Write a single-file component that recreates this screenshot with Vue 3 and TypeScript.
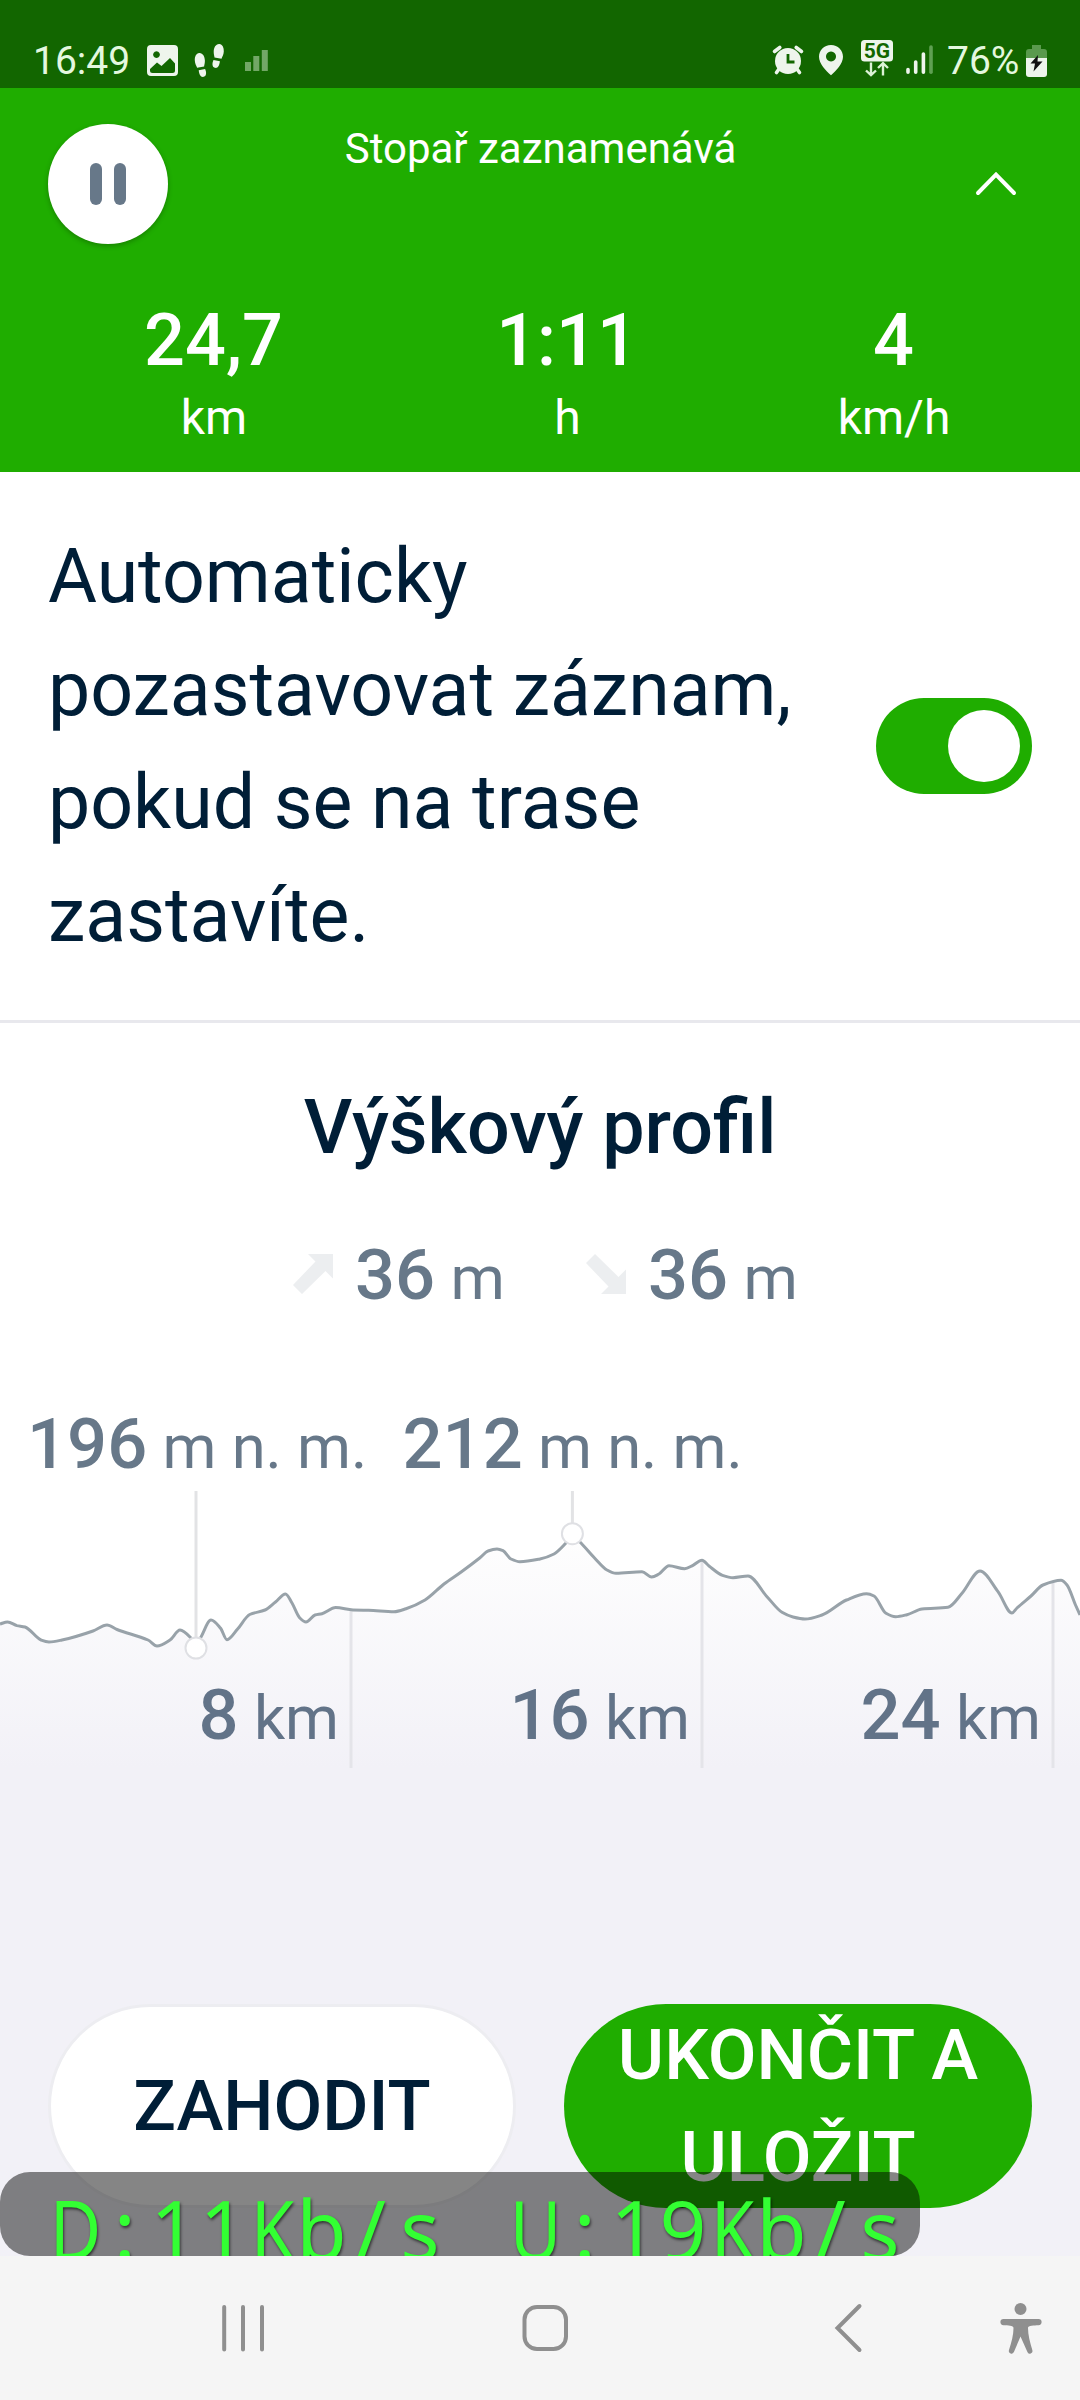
<script setup lang="ts">
type Point = [number, number]

const stats = [
  { value: '24,7', unit: 'km' },
  { value: '1:11', unit: 'h' },
  { value: '4', unit: 'km/h' },
]

const download = 'D:11Kb/s'.split('')
const upload = 'U:19Kb/s'.split('')

const profile: Point[] = [
  [0, 1624], [7.6, 1622], [17, 1625.6], [25, 1627], [41, 1640], [49, 1642], [62, 1640], [93, 1631],
  [107, 1625], [117, 1629.5], [148, 1640], [157, 1646], [170, 1640], [180, 1630], [191.5, 1638.7],
  [196, 1646], [201, 1637], [211, 1620], [220.4, 1628], [227, 1639.7], [237.6, 1629], [249.7, 1614.5],
  [265, 1610], [275.5, 1602], [285.5, 1594], [292, 1603], [299.6, 1617.7], [306, 1622], [315, 1615],
  [322, 1613.7], [335.7, 1607.6], [353, 1610], [368.5, 1610.3], [394, 1611.7], [406, 1608.7],
  [425, 1600], [444, 1584], [461.5, 1571.7], [480, 1557.7], [488, 1551], [497, 1549], [503, 1550.7],
  [511, 1559], [520, 1561.7], [540, 1559], [554, 1554], [566, 1543], [572.4, 1535], [580, 1542],
  [595, 1558.5], [607, 1570], [616, 1573.3], [642, 1571.7], [651.6, 1577], [659, 1574], [669, 1565.7],
  [684.6, 1568.7], [693, 1565.3], [702, 1560.3], [709, 1566], [722.5, 1575.3], [733, 1577.7],
  [748, 1576], [767, 1596.7], [782, 1612.3], [793, 1617], [805, 1619], [822, 1615], [846.5, 1600],
  [866.5, 1593.7], [874, 1596], [886, 1613.3], [895.7, 1616.7], [907, 1614.7], [922, 1609],
  [948, 1607.3], [962, 1593.3], [980, 1571], [998, 1591.7], [1012, 1613], [1017, 1608], [1031, 1596],
  [1043, 1585], [1061, 1580.3], [1067, 1585], [1075.5, 1605], [1080, 1615],
]

// Monotone cubic interpolation, so peaks never overshoot the samples.
function smooth(points: Point[]): string {
  const last = points.length - 1
  const slopes = points.slice(1).map((p, i) => (p[1] - points[i][1]) / (p[0] - points[i][0]))
  const tangents = points.map((_, i) => {
    if (i === 0) return slopes[0]
    if (i === last) return slopes[last - 1]
    const a = slopes[i - 1]
    const b = slopes[i]
    return a * b <= 0 ? 0 : (2 * a * b) / (a + b)
  })
  let d = `M${points[0][0]} ${points[0][1]}`
  for (let i = 0; i < last; i++) {
    const [x0, y0] = points[i]
    const [x1, y1] = points[i + 1]
    const h = (x1 - x0) / 3
    d += `C${(x0 + h).toFixed(1)} ${(y0 + tangents[i] * h).toFixed(1)} ${(x1 - h).toFixed(1)} ${(y1 - tangents[i + 1] * h).toFixed(1)} ${x1} ${y1}`
  }
  return d
}

const line = smooth(profile)
const area = `${line}V1768H0Z`

const distances = [
  { x: 351, y: 1611, km: '8' },
  { x: 702, y: 1562, km: '16' },
  { x: 1053, y: 1583, km: '24' },
]

const extremes = [
  { x: 196, y: 1648, label: '196', labelX: 27 },
  { x: 572.4, y: 1533.7, label: '212', labelX: 402.5 },
]
</script>

<template>
  <div class="screen">
    <div class="status">
      <div class="side">
        <span class="clock">16:49</span>
        <svg class="left-icons" width="124" height="40" viewBox="146 41 124 40">
          <path
            fill="#eef5ec" fill-rule="evenodd"
            d="M151 45H174a4 4 0 0 1 4 4V72a4 4 0 0 1-4 4H151a4 4 0 0 1-4-4V49a4 4 0 0 1 4-4ZM156.500 51.200a3.400 3.400 0 1 0 .01 0ZM150 69L157 62.500L161.500 66L170 58L175 63.500V70.500a2.500 2.500 0 0 1-2.500 2.500H152.500a2.500 2.500 0 0 1-2.500-2.500Z"
          />
          <g fill="#eef5ec">
            <path d="M199.200 53c3.500-.3 5.600 3.500 5.700 7.700 0 2.400-.6 4.200-.8 5.700l-7 1.300c-.6-2-2.200-4-2.300-7.300-.1-4 1.400-7.100 4.400-7.400ZM198.700 70.200l6.400-1.200c1.400 3 1.600 7-1.300 7.800-3.200.8-4.700-2.700-5.100-6.600Z" />
            <path d="M219.400 44c-3.500-.3-5.600 3.500-5.700 7.700 0 2.400.6 4.200.8 5.700l7 1.300c.6-2 2.200-4 2.300-7.300.1-4-1.400-7.100-4.400-7.400ZM219.900 61.200l-6.400-1.200c-1.400 3-1.600 7 1.300 7.800 3.200.8 4.700-2.700 5.100-6.600Z" />
          </g>
          <path fill="#72a766" d="M245 62h6v9h-6ZM253.300 56h6v15h-6ZM261.800 50h6v21h-6Z" />
        </svg>
      </div>
      <div class="side">
        <svg width="164" height="40" viewBox="771 41 164 40" class="right-icons">
          <g stroke="#eef5ec" stroke-linecap="round" fill="none">
            <path d="M774.500 51.500L779.800 47.500M801.500 51.500L796.200 47.500" stroke-width="3.600" />
            <path d="M779 69L776.500 72.500M797 69L799.500 72.500" stroke-width="3.600" />
          </g>
          <circle cx="788" cy="61" r="13" fill="#eef5ec" />
          <path d="M788 54V62H794.500" stroke="#126600" stroke-width="2.800" fill="none" />
          <path fill="#eef5ec" fill-rule="evenodd" d="M831 45c7 0 12 5.200 12 11.800 0 7-7 14-12 18.500-5-4.500-12-11.500-12-18.500C819 50.200 824 45 831 45ZM831 51.500a5 5 0 1 0 .01 0Z" />
          <rect x="861" y="40" width="32" height="21.500" rx="3.500" fill="#eef5ec" />
          <text x="877" y="58.200" class="net" text-anchor="middle">5G</text>
          <path d="M871 62.500V75M866 70.500L871 75.200L876 70.500M883 75.500V63.500M878 68L883 63.200L888 68" stroke="#dcf2d6" stroke-width="2.400" fill="none" />
          <g stroke-width="3.600" stroke-linecap="round" stroke="#eef5ec">
            <path d="M908 69.500V72.300M915.700 62V72.300M923.400 54V72.300" />
            <path d="M931 47V72.300" stroke="#5fa052" />
          </g>
        </svg>
        <span class="percent">76%</span>
        <svg width="22" height="34" viewBox="1026 43 22 34" class="battery">
          <path fill="#5a9a4d" d="M1032 44H1041V48H1044a3 3 0 0 1 3 3V57H1026V51a3 3 0 0 1 3-3H1032Z" />
          <path fill="#eef5ec" d="M1026 57H1047V73a3 3 0 0 1-3 3H1029a3 3 0 0 1-3-3Z" />
          <path fill="#111" d="M1038 54L1030.500 62.500H1035L1033.500 70.500L1042.500 60.500H1037.500Z" />
        </svg>
      </div>
    </div>

    <header class="header">
      <div class="bar">
        <button class="pause" type="button" aria-label="Pozastavit"><i /><i /></button>
        <div class="title">Stopař zaznamenává</div>
        <svg width="120" height="120" viewBox="0 0 120 120">
          <path d="M66 69L84 50.500L102 69" fill="none" stroke="#fff" stroke-width="4" stroke-linecap="round" />
        </svg>
      </div>
      <div class="stats">
        <div v-for="s in stats" :key="s.unit" class="stat">
          <div class="value">{{ s.value }}</div>
          <div class="unit">{{ s.unit }}</div>
        </div>
      </div>
    </header>

    <section class="auto">
      <p>Automaticky pozastavovat záznam, pokud se na trase zastavíte.</p>
      <div class="toggle"><span /></div>
    </section>

    <section class="elevation">
      <h2>Výškový profil</h2>
      <div class="climb">
        <div class="delta">
          <svg width="40" height="40" viewBox="0 0 40 40"><path fill="#eceef0" d="M15 0H40V24.500L32.500 17L9 40L0 31L22.500 7.500Z" /></svg>
          <span><b>36</b> m</span>
        </div>
        <div class="delta">
          <svg width="40" height="40" viewBox="0 0 40 40"><path fill="#eceef0" d="M15 40H40V15.500L32.500 23L9 0L0 9L22.500 32.500Z" /></svg>
          <span><b>36</b> m</span>
        </div>
      </div>
      <svg class="chart" width="1080" height="441" viewBox="0 1327 1080 441">
        <defs>
          <linearGradient id="fade" gradientUnits="userSpaceOnUse" x1="0" y1="1535" x2="0" y2="1768">
            <stop offset="0" stop-color="#fefefe" />
            <stop offset="1" stop-color="#f2f1f7" />
          </linearGradient>
        </defs>
        <path :d="area" fill="url(#fade)" />
        <g v-for="d in distances" :key="d.km">
          <path :d="`M${d.x} ${d.y}V1768`" stroke="#e4e4e9" stroke-width="3" />
        </g>
        <path :d="line" fill="none" stroke="#98a2a9" stroke-width="3" stroke-linejoin="round" />
        <g v-for="e in extremes" :key="e.label">
          <path :d="`M${e.x} 1491V${e.y}`" stroke="#e2e3e5" stroke-width="3" />
          <circle :cx="e.x" :cy="e.y" r="10.500" fill="#fff" stroke="#dfe0e4" stroke-width="2" />
          <text :x="e.labelX" y="1468.300"><tspan class="num">{{ e.label }}</tspan> m n. m.</text>
        </g>
        <text v-for="d in distances" :key="d.km" :x="d.x - 12" y="1739" text-anchor="end" class="dist"><tspan class="num">{{ d.km }}</tspan> km</text>
      </svg>
    </section>

    <div class="actions">
      <button type="button" class="discard">ZAHODIT</button>
      <button type="button" class="save">UKONČIT A ULOŽIT</button>
    </div>

    <div class="speed">
      <span class="rate"><span v-for="(c, i) in download" :key="i" class="cell" :class="{ wide: /[A-Z]/.test(c) }">{{ c }}</span></span>
      <span class="rate"><span v-for="(c, i) in upload" :key="i" class="cell" :class="{ wide: /[A-Z]/.test(c) }">{{ c }}</span></span>
    </div>

    <nav class="nav">
      <svg width="1080" height="144" viewBox="0 2256 1080 144" fill="none" stroke="#8f8f8f" stroke-width="4" stroke-linecap="round">
        <path d="M224.200 2307V2349.500M243 2307V2349.500M262 2307V2349.500" />
        <rect x="524.500" y="2307" width="41.500" height="42" rx="12.500" />
        <path d="M859.500 2306L837.500 2328L859.500 2350" />
        <g fill="#8f8f8f" stroke="none">
          <circle cx="1020.500" cy="2309" r="6" />
          <path d="M1003.500 2319H1038.500a2.900 2.900 0 0 1 0 6.200C1034 2325.600 1028 2325 1028 2328C1028 2335 1030 2342 1032.300 2350a2.500 2.500 0 0 1-5 1.800L1020.500 2336.500L1014 2351.800a2.500 2.500 0 0 1-5-1.800C1011.500 2342 1013.500 2335 1013.500 2328C1013.500 2325 1008 2325.600 1003.500 2325.200a2.900 2.900 0 0 1 0-6.200Z" />
        </g>
      </svg>
    </nav>
  </div>
</template>

<style>
body {
  margin: 0;
}
</style>

<style scoped>
.screen {
  position: relative;
  width: 1080px;
  height: 2400px;
  overflow: hidden;
  display: flex;
  flex-direction: column;
  background: #fff;
  font-family: Roboto, "Liberation Sans", sans-serif;
}
svg {
  display: block;
  flex: none;
}
.status {
  box-sizing: border-box;
  height: 88px;
  padding: 34px 32px 0 33px;
  display: flex;
  justify-content: space-between;
  align-items: center;
  background: #126600;
  color: #e4f8df;
  font-size: 39px;
  line-height: 54px;
}
.side {
  display: flex;
  align-items: center;
}
.clock {
  width: 113px;
}
.percent {
  margin-left: 12px;
  width: 79px;
  white-space: nowrap;
}
.left-icons,
.right-icons {
  overflow: visible;
}
.net {
  font: 700 21px Roboto, sans-serif;
  fill: #126600;
}
.header {
  box-sizing: border-box;
  height: 384px;
  background: #1fad00;
  color: #fff;
}
.bar {
  display: flex;
  padding: 36px 48px 0;
}
.pause {
  width: 120px;
  height: 120px;
  padding: 0;
  border: 0;
  border-radius: 50%;
  background: #fff;
  box-shadow: 0 2px 5px rgba(0, 0, 0, 0.25);
  display: flex;
  align-items: center;
  justify-content: center;
  gap: 12px;
}
.pause i {
  width: 12px;
  height: 42px;
  border-radius: 6px;
  background: #677889;
}
.title {
  flex: 1;
  padding-left: 1px;
  text-align: center;
  font-size: 42px;
  line-height: 50px;
}
.stats {
  display: grid;
  grid-template-columns: 427px 277px 373px;
  justify-content: space-between;
  padding-top: 55px;
  text-align: center;
}
.value {
  font-size: 72px;
  line-height: 84px;
  font-weight: 500;
}
.unit {
  margin-top: 7px;
  padding-left: 1px;
  font-size: 48px;
  line-height: 56px;
}
.auto {
  display: flex;
  justify-content: space-between;
  align-items: center;
  padding: 48px;
  border-bottom: 3px solid #e8e8ed;
  color: #001e37;
}
.auto p {
  margin: 0;
  width: 780px;
  font-size: 75.200px;
  line-height: 113px;
}
.toggle {
  box-sizing: border-box;
  width: 156px;
  height: 96px;
  padding: 12px;
  border-radius: 48px;
  background: #1fad00;
  display: flex;
  justify-content: flex-end;
}
.toggle span {
  width: 72px;
  height: 72px;
  border-radius: 50%;
  background: #fff;
}
.elevation h2 {
  margin: 48px 0 37px;
  text-align: center;
  font-size: 75.400px;
  line-height: 112px;
  font-weight: 500;
  color: #001e37;
}
.climb {
  display: flex;
  padding-left: 293px;
  height: 107px;
  color: #677889;
}
.delta {
  display: flex;
  align-items: center;
  gap: 22px;
  width: 293px;
  height: 108px;
  font-size: 62px;
  line-height: 108px;
  white-space: nowrap;
}
.delta span {
  padding-top: 4px;
}
.delta b {
  font-size: 70.500px;
  font-weight: 500;
}
.chart text {
  font-family: Roboto, sans-serif;
  font-size: 61.500px;
  fill: #677889;
}
.chart text.dist {
  fill: #627388;
}
.chart .num {
  font-size: 70.500px;
  font-weight: 500;
}
.actions {
  flex: 1;
  display: flex;
  align-items: flex-start;
  gap: 48px;
  padding: 236px 48px 0;
  background: #f2f1f7;
}
.actions button {
  box-sizing: border-box;
  width: 468px;
  height: 204px;
  border: 0;
  border-radius: 102px;
  padding: 0 40px;
  font: 500 70.800px/102px Roboto, sans-serif;
}
.actions .discard {
  border: 3px solid #ededf1;
  background: #fff;
  color: #001e37;
}
.actions .save {
  background: #1fad00;
  color: #fff;
}
.speed {
  position: absolute;
  left: 0;
  top: 2172px;
  box-sizing: border-box;
  width: 920px;
  height: 84px;
  padding-left: 51px;
  overflow: hidden;
  border-radius: 30px;
  background: rgba(0, 0, 0, 0.48);
  display: flex;
  gap: 66.400px;
  font-family: "Noto Sans", sans-serif;
  font-size: 82px;
  line-height: 112px;
  color: #33ff33;
  text-shadow: 1px 2px 3px rgba(0, 0, 0, 0.6);
}
.rate {
  display: flex;
}
.cell {
  width: 49.200px;
  display: flex;
  justify-content: center;
}
.wide {
  transform: scaleX(0.86);
}
.nav {
  height: 144px;
  background: #f5f5f5;
}
</style>
